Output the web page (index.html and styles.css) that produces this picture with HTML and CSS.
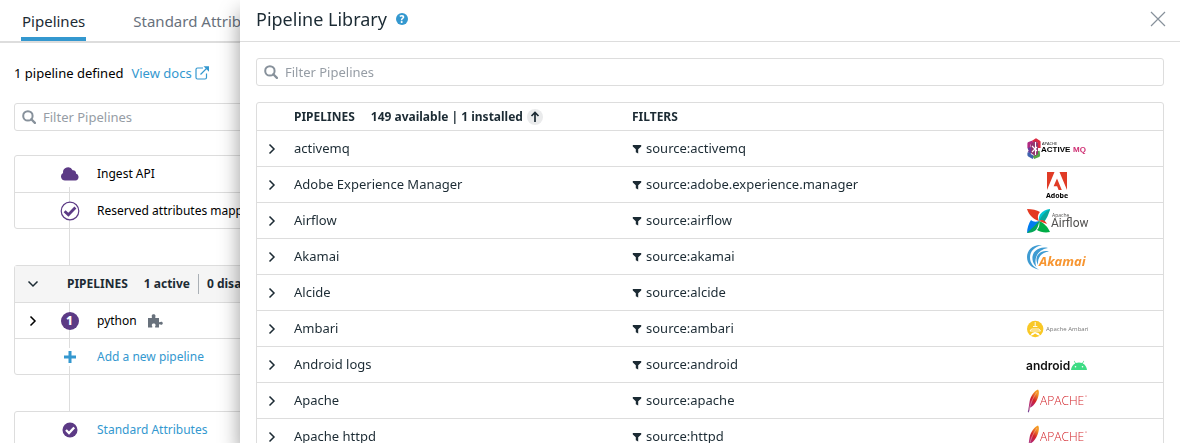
FILE: index.html
```html
<!DOCTYPE html>
<html lang="en">
<head>
<meta charset="utf-8">
<title>Pipelines</title>
<link rel="stylesheet" href="styles.css">
</head>
<body>
<svg class="sprite" aria-hidden="true">
  <linearGradient id="feather-fill" x1="0" y1="1" x2=".5" y2="0"><stop offset="0" stop-color="#6d4b9c"/><stop offset=".35" stop-color="#b32572"/><stop offset=".65" stop-color="#d22128"/><stop offset="1" stop-color="#f59a23"/></linearGradient>
  <symbol id="chevron" viewBox="0 0 12 12"><path d="M3.500 1.500 8 6l-4.500 4.500" fill="none" stroke="currentColor" stroke-width="1.500"/></symbol>
  <symbol id="search" viewBox="0 0 14 14"><circle cx="5.900" cy="5.900" r="4.700" fill="none" stroke="currentColor" stroke-width="2"/><path d="m9.300 9.300 3.600 3.600" stroke="currentColor" stroke-width="2.300" stroke-linecap="round"/></symbol>
  <symbol id="funnel" viewBox="0 0 10 10"><path d="M.8 1h8.400v1.600L6.200 5.200V9.600L3.800 8.200V5.200L.8 2.600z" fill="currentColor"/></symbol>
  <symbol id="feather" viewBox="0 0 14 24">
    <path d="M11 .5C7 2 3.500 7.500 2.600 12.500c-.5 3-.8 6-1.800 10.500l1 .4 1.400-5c2-.5 4.200-2.500 5.800-5.600 2.400-4.300 4-9.800 2-12.300z" fill="url(#feather-fill)"/>
    <path d="M10 3C6.500 8 4 13 2 21" fill="none" stroke="#f7c3bd" stroke-width=".5"/>
  </symbol>
</svg>

<main class="page">
  <nav class="tabs">
    <a class="tab tab-active" href="#pipelines">Pipelines</a>
    <a class="tab" href="#attributes">Standard Attributes</a>
  </nav>
  <div class="content">
    <p class="summary">1 pipeline defined
      <a class="link" href="#docs">View docs <svg class="icon-external" viewBox="0 0 14 14"><path d="M8 2H2.500A1.500 1.500 0 0 0 1 3.500v8A1.500 1.500 0 0 0 2.500 13h7.500a1.500 1.500 0 0 0 1.500-1.500V7.500M5.500 8.500 12 2" fill="none" stroke="currentColor" stroke-width="1.200"/><path d="M8.500.2H14v5.500z" fill="currentColor"/></svg></a>
    </p>
    <label class="search"><svg class="icon-search"><use href="#search"/></svg><input type="text" placeholder="Filter Pipelines" aria-label="Filter defined pipelines"></label>

    <section class="card card-first">
      <div class="step">
        <span></span>
        <span class="node node-start"><svg class="icon-cloud" viewBox="0 0 18 14"><path d="M4 13.500a4 4 0 0 1-1.900-7.500A5 5 0 0 1 11.600 3.200a3 3 0 0 1 3.400 3.300A3.600 3.600 0 0 1 14.500 13.500z" fill="#5c3a85"/></svg></span>
        <span class="step-name">Ingest API</span>
      </div>
      <div class="step">
        <span></span>
        <span class="node"><svg class="icon-check" viewBox="0 0 20 20"><circle cx="10" cy="10" r="8.800" fill="#fff" stroke="#5c3a85" stroke-width="1.200"/><path d="m4.600 10.200 3.800 3.600 7-7.200" fill="none" stroke="#5c3a85" stroke-width="2.800"/></svg></span>
        <span class="step-name">Reserved attributes mapper</span>
      </div>
    </section>
    <div class="connector"></div>
    <section class="card">
      <div class="step step-head">
        <button class="expand" aria-label="Collapse pipelines"><svg class="icon-chevron icon-down"><use href="#chevron"/></svg></button>
        <div class="step-title"><span>PIPELINES</span><span>1 active</span><span class="disabled-count">0 disabled</span></div>
      </div>
      <div class="step">
        <button class="expand" aria-label="Expand python"><svg class="icon-chevron"><use href="#chevron"/></svg></button>
        <span class="node"><span class="badge">1</span></span>
        <span class="step-name">python <svg class="icon-puzzle" viewBox="0 0 15 14"><path d="M0 4h3.700C4.300 3 3.700 2.600 3.700 1.900 3.700.9 4.500.3 5.600.3s1.900.6 1.900 1.600c0 .7-.6 1.100 0 2.100H11v4c.8.500 1.300-.3 2.200-.3 1 0 1.600.6 1.600 1.500s-.6 1.500-1.600 1.500c-.9 0-1.400-.8-2.200-.3V13.500H7.200c-.5-1 .4-1.300.4-2.200 0-1-.8-1.700-1.900-1.700s-1.900.7-1.900 1.700c0 .9.900 1.200.4 2.200H0z" fill="#68717c"/></svg></span>
      </div>
      <div class="step">
        <span></span>
        <span class="node"><svg class="icon-plus" viewBox="0 0 18 18"><path d="M0 0h18v18H0z" fill="#fff"/><path d="M9 3v12M3 9h12" stroke="#3498cf" stroke-width="3"/></svg></span>
        <a class="step-name link" href="#new">Add a new pipeline</a>
      </div>
    </section>
    <div class="connector"></div>
    <section class="card">
      <div class="step">
        <span></span>
        <span class="node node-end"><svg class="icon-done" viewBox="0 0 16 16"><circle cx="8" cy="8" r="7.500" fill="#5c3a85"/><path d="m4 8 3 3 5.200-5.500" fill="none" stroke="#fff" stroke-width="2.300"/></svg></span>
        <a class="step-name link" href="#standard">Standard Attributes</a>
      </div>
    </section>
  </div>
</main>

<aside class="drawer" role="dialog" aria-labelledby="drawer-title">
  <header class="drawer-head">
    <h1 id="drawer-title">Pipeline Library</h1>
    <button class="help" aria-label="Help">?</button>
    <button class="close" aria-label="Close"><svg viewBox="0 0 16 16"><path d="m1 1 14 14M15 1 1 15" stroke="#87919b" stroke-width="1.200"/></svg></button>
  </header>
  <div class="drawer-body">
    <label class="search"><svg class="icon-search"><use href="#search"/></svg><input type="text" placeholder="Filter Pipelines" aria-label="Filter library"></label>
    <div class="frame">
    <table class="library">
      <colgroup><col class="col-expand"><col class="col-name"><col><col class="col-logo"></colgroup>
      <thead>
        <tr><th></th><th><div class="head-cell"><span class="head-label">PIPELINES</span><span>149 available | 1 installed</span><button class="sort" aria-label="Sort"><svg viewBox="0 0 16 16"><path d="M8 13V3.500M4.500 7 8 3.500 11.500 7" fill="none" stroke="currentColor" stroke-width="1.700"/></svg></button></div></th><th>FILTERS</th><th></th></tr>
      </thead>
      <tbody>
        <tr><td><button class="expand" aria-label="Expand activemq"><svg class="icon-chevron"><use href="#chevron"/></svg></button></td><td class="label">activemq</td><td class="label"><svg class="icon-funnel"><use href="#funnel"/></svg>source:activemq</td>
          <td><svg class="logo" viewBox="0 0 60 24" role="img" aria-label="Apache ActiveMQ">
            <g fill="none" stroke-width="3.200" stroke-linejoin="round"><path d="M6 5 2 6.500v4.500" stroke="#b12a82"/><path d="M6 5 9 3l3 2v6" stroke="#dc2a42"/><path d="M2 10.500 3.500 14 2 16" stroke="#6a3b99"/><path d="M2 15.500V18l4.500 2.500" stroke="#3f63ae"/><path d="m6.500 20.500 5-2L11 14" stroke="#54a646"/></g>
            <path d="m4 7 4-3 3 2v11l-3 2-4-3z" fill="#90356e"/><path d="M8.500 5v13M5 9l5 5M5 15l5-5" stroke="#fff" stroke-width="1.100"/>
            <text x="15" y="8" class="mq-small">APACHE</text><text x="14" y="15" class="mq-word">ACTIVE <tspan x="46" fill="#cf2f73">MQ</tspan></text></svg></td></tr>
        <tr><td><button class="expand" aria-label="Expand Adobe Experience Manager"><svg class="icon-chevron"><use href="#chevron"/></svg></button></td><td class="label">Adobe Experience Manager</td><td class="label"><svg class="icon-funnel"><use href="#funnel"/></svg>source:adobe.experience.manager</td>
          <td><svg class="logo logo-tall" viewBox="0 0 60 30" role="img" aria-label="Adobe"><path d="M20 2h7.500L20 20zm20 0h-7.500L40 20zM30 8.500 34.800 20h-3.200l-1.500-3.700h-3.500z" fill="#e03b26"/><text x="30" y="28" class="adobe-word">Adobe</text></svg></td></tr>
        <tr><td><button class="expand" aria-label="Expand Airflow"><svg class="icon-chevron"><use href="#chevron"/></svg></button></td><td class="label">Airflow</td><td class="label"><svg class="icon-funnel"><use href="#funnel"/></svg>source:airflow</td>
          <td><svg class="logo" viewBox="0 0 60 24" role="img" aria-label="Apache Airflow">
            <path d="M12 12C6 10 2 6 0 0c5 0 10 1 13 3-2 2-3 5-1 9z" fill="#e43921"/>
            <path d="M12 12c-1-6 3-11 11-12-1 4-3 6-6 8-2 1-4 2-5 4z" fill="#00c7d4"/><path d="M12 12c3-6 6-9 11-12-1 5-4 11-6 13-1-2-3-2-5-1z" fill="#0aa79b"/>
            <path d="M12 12c5 2 9 6 11 11-5 1-10 0-13-2 2-2 3-5 2-9z" fill="#00ad46"/><path d="M12 12c3-2 6-1 8 3-3-1-5-2-8-3z" fill="#e43921"/>
            <path d="M12 12C11 18 6 22 0 24c0-5 2-10 4-13 2 2 5 2 8 1z" fill="#017cee"/><path d="M12 12C8 17 5 19 0 24c3 0 7-1 9-3 2-3 3-6 3-9z" fill="#04a659"/>
            <text x="25" y="8" class="airflow-small">Apache</text><text x="24" y="18" class="airflow-word">Airflow</text></svg></td></tr>
        <tr><td><button class="expand" aria-label="Expand Akamai"><svg class="icon-chevron"><use href="#chevron"/></svg></button></td><td class="label">Akamai</td><td class="label"><svg class="icon-funnel"><use href="#funnel"/></svg>source:akamai</td>
          <td><svg class="logo" viewBox="0 0 60 24" role="img" aria-label="Akamai"><g fill="#3e9bd2"><path d="M15 0C6-.8 0 5 0 12s5 11.500 12 12.500C6 22 3 17.500 3 12.500 3 6 8 1.500 15 0z"/><path d="M21 3C12 1 4.500 6.500 5.500 14.500c.3 3 2 5.500 4 7.500C7 15 9 5 21 3z"/><path d="M22 6.500C15 4.500 9 9.500 9.500 15c.2 2 .7 3.500 1.500 5C10.500 12.500 14 7.500 22 6.500z"/></g><text x="12" y="21" class="akamai-word">Akamai</text></svg></td></tr>
        <tr><td><button class="expand" aria-label="Expand Alcide"><svg class="icon-chevron"><use href="#chevron"/></svg></button></td><td class="label">Alcide</td><td class="label"><svg class="icon-funnel"><use href="#funnel"/></svg>source:alcide</td><td></td></tr>
        <tr><td><button class="expand" aria-label="Expand Ambari"><svg class="icon-chevron"><use href="#chevron"/></svg></button></td><td class="label">Ambari</td><td class="label"><svg class="icon-funnel"><use href="#funnel"/></svg>source:ambari</td>
          <td><svg class="logo" viewBox="0 0 60 24" role="img" aria-label="Apache Ambari"><circle cx="8.200" cy="12" r="8.200" fill="#f9c825"/><path d="M8.200 5v4M6 9.500h4.400M4.500 12h7.500l1.500 2H3z" fill="none" stroke="#fff" stroke-width=".9"/><path d="m3 19 2-3 3-1 3.500 1 2 3-3-1-2.300-1.500L6 18z" fill="#fff"/><text x="19" y="14" class="ambari-word">Apache Ambari</text></svg></td></tr>
        <tr><td><button class="expand" aria-label="Expand Android logs"><svg class="icon-chevron"><use href="#chevron"/></svg></button></td><td class="label">Android logs</td><td class="label"><svg class="icon-funnel"><use href="#funnel"/></svg>source:android</td>
          <td><svg class="logo" viewBox="0 0 60 24" role="img" aria-label="Android"><text x="-1" y="17" class="android-word">android</text><path d="M44 17c.2-3 1.800-5.400 4.200-6.600L46.800 8l.5-.3 1.500 2.400a9 9 0 0 1 6.400 0l1.500-2.400.5.300-1.400 2.400C58.200 11.600 59.800 14 60 17z" fill="#3ddc84"/><circle cx="48.500" cy="13.800" r=".8" fill="#fff"/><circle cx="55.500" cy="13.800" r=".8" fill="#fff"/></svg></td></tr>
        <tr><td><button class="expand" aria-label="Expand Apache"><svg class="icon-chevron"><use href="#chevron"/></svg></button></td><td class="label">Apache</td><td class="label"><svg class="icon-funnel"><use href="#funnel"/></svg>source:apache</td>
          <td><svg class="logo" viewBox="0 0 60 24" role="img" aria-label="Apache"><use href="#feather" width="14" height="24"/><text x="13" y="16" class="apache-word">APACHE</text><circle cx="59" cy="7" r=".6" fill="#d22128"/></svg></td></tr>
        <tr><td><button class="expand" aria-label="Expand Apache httpd"><svg class="icon-chevron"><use href="#chevron"/></svg></button></td><td class="label">Apache httpd</td><td class="label"><svg class="icon-funnel"><use href="#funnel"/></svg>source:httpd</td>
          <td><svg class="logo" viewBox="0 0 60 24" role="img" aria-label="Apache"><use href="#feather" width="14" height="24"/><text x="13" y="16" class="apache-word">APACHE</text><circle cx="59" cy="7" r=".6" fill="#d22128"/></svg></td></tr>
      </tbody>
    </table>
    </div>
  </div>
</aside>
</body>
</html>
```
FILE: styles.css
```css
* { box-sizing: border-box; }

body {
  margin: 0;
  height: 100vh;
  overflow: hidden;
  background: #fff;
  color: #1c2b34;
  font: 13px/20px "Noto Sans", sans-serif;
}

a { color: inherit; text-decoration: none; }
svg { display: block; flex: none; }
button { padding: 0; border: 0; background: none; color: inherit; font: inherit; }
.sprite { position: absolute; width: 0; height: 0; }
.link { color: #3498cf; }

.tabs { display: flex; gap: 46px; padding-left: 21px; border-bottom: 2px solid #ddd; }
.tab { height: 41px; padding: 11px 1px 0; color: #68717c; font-size: 15px; white-space: nowrap; }
.tab-active { color: #1c2b34; border-bottom: 4px solid #3498cf; }

.content { padding: 20px 14px 0; }
.summary { display: flex; gap: 8px; margin: 0 0 20px; color: #000; }
.summary .link { display: flex; align-items: center; gap: 3px; }
.icon-external { width: 14px; height: 14px; }

.search { display: flex; align-items: center; gap: 7px; height: 28px; padding-left: 7px; border: 1px solid #ddd; border-radius: 3px; color: #87919b; }
.search input { flex: 1; min-width: 0; padding: 0; border: 0; outline: 0; background: none; font: inherit; }
.search input::placeholder { color: #969da5; opacity: 1; }
.icon-search { width: 14px; height: 14px; }

.card { border: 1px solid #ddd; border-radius: 3px; color: #000; font-size: 12px; }
.card-first { margin-top: 24px; }
.step { display: grid; grid-template-columns: 36px 37px 1fr; align-items: center; height: 36px; border-top: 1px solid #ddd; }
.step:first-child { border-top: 0; }
.step-head { grid-template-columns: 36px 1fr; background: #f5f5f5; color: #1c2b34; font-weight: 700; }
.step-title { display: flex; gap: 16px; padding-left: 16px; }
.disabled-count { margin-left: -8px; padding-left: 8px; border-left: 1px solid #aab0b6; }
.step-name { display: flex; align-items: center; gap: 11px; padding-left: 9px; }
.node { display: grid; place-items: center; height: 100%; background: linear-gradient(#ddd, #ddd) center / 1px 100% no-repeat; }
.node-start { background-position: bottom; background-size: 1px 5px; }
.node-end { background: none; }
.connector { width: 37px; height: 36px; margin-left: 37px; background: linear-gradient(#ddd, #ddd) center / 1px 100% no-repeat; }
.badge { width: 18px; height: 18px; border-radius: 50%; background: #5c3a85; color: #fff; font-weight: 800; font-size: 12px; line-height: 18px; text-align: center; }
.icon-cloud { width: 18px; height: 14px; }
.icon-check { width: 20px; height: 20px; }
.icon-plus { width: 18px; height: 18px; }
.icon-done { width: 16px; height: 16px; }
.icon-puzzle { width: 15px; height: 14px; }

.expand { display: grid; place-items: center; width: 100%; }
.icon-chevron { width: 12px; height: 12px; }
.icon-down { transform: rotate(90deg); }

.drawer { position: fixed; top: 0; right: 0; bottom: 0; left: 240px; background: #fff; box-shadow: 0 12px 20px rgba(0, 0, 0, .4); }
.drawer-head { display: flex; align-items: center; gap: 9px; height: 42px; padding: 0 14px 4px 16px; border-bottom: 1px solid #ddd; }
.drawer-head h1 { margin: 0; font-size: 18px; line-height: 24px; font-weight: 400; }
.help { width: 12px; height: 12px; border-radius: 50%; background: #3498cf; color: #fff; font-size: 10px; line-height: 12px; font-weight: 800; }
.close { width: 16px; height: 16px; margin-left: auto; }
.drawer-body { padding: 16px; }

.frame { margin-top: 16px; border: 1px solid #ddd; border-radius: 3px; }
.library { width: 100%; table-layout: fixed; border-spacing: 0; }
.col-expand { width: 37px; }
.col-name { width: 338px; }
.col-logo { width: 136px; }
.library th { height: 27px; padding: 0; font-size: 12px; text-align: left; }
.library td { height: 36px; padding: 0; border-top: 1px solid #ddd; white-space: nowrap; }
.library .label { padding-bottom: 2px; }
.library .expand { width: 30px; }
.head-cell { display: flex; align-items: center; }
.head-label { margin-right: 16px; }
.sort { width: 16px; height: 16px; margin-left: 4px; border-radius: 50%; background: #eaebec; }
.icon-funnel { display: inline-block; width: 10px; height: 10px; margin-right: 4px; vertical-align: -1px; }

.logo { width: 60px; height: 24px; overflow: visible; }
.logo-tall { height: 30px; }
.logo .mq-small { font: 4px "Open Sans", sans-serif; }
.logo .mq-word { font: 700 8px "Liberation Sans", sans-serif; }
.logo .adobe-word { font: 700 7px "Noto Sans", sans-serif; text-anchor: middle; }
.logo .airflow-small { font: 5px "Open Sans", sans-serif; fill: #51504f; }
.logo .airflow-word { font: 12px Roboto, sans-serif; fill: #51504f; }
.logo .akamai-word { font: italic 700 13px "Open Sans", sans-serif; fill: #f79530; }
.logo .ambari-word { font: 6px "Open Sans", sans-serif; fill: #777; }
.logo .android-word { font: 600 12px Inter, sans-serif; fill: #111; }
.logo .apache-word { font: 300 12px "Open Sans", sans-serif; fill: #d22128; }
```
